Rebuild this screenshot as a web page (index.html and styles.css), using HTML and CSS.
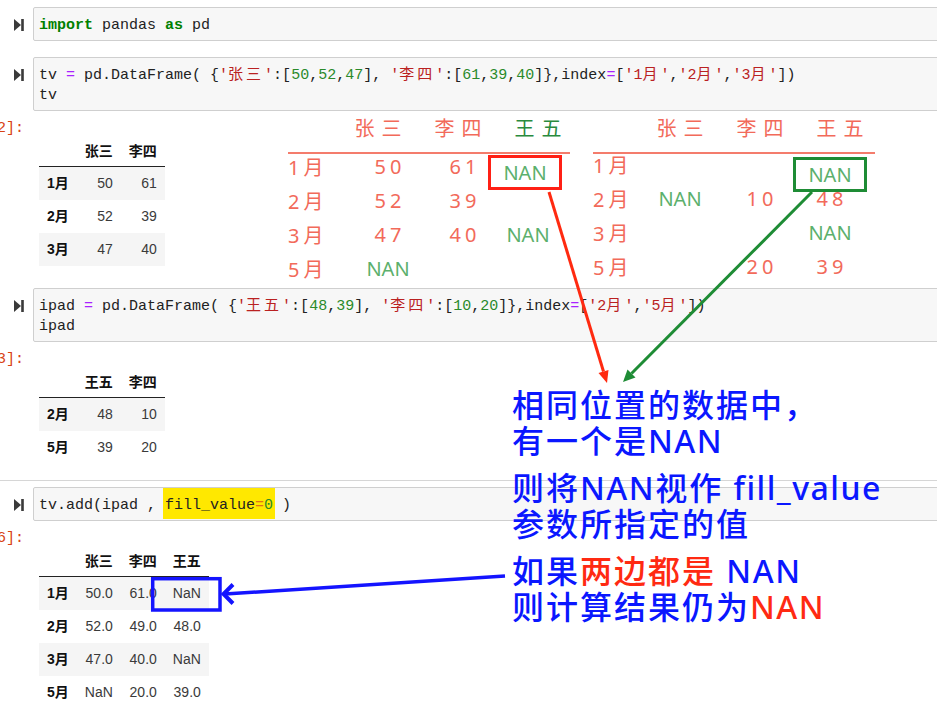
FILE: index.html
```html
<!DOCTYPE html>
<html lang="zh">
<head>
<meta charset="utf-8">
<title>pandas add fill_value</title>
<link rel="stylesheet" href="styles.css">
</head>
<body>
<div class="page">
  <div class="nb">
    <div class="cell first">
      <div class="prompt"><svg class="run" width="10" height="12" viewBox="0 0 10 12"><path d="M0 0L7 6L0 12Z"/><rect x="7.2" y="0" width="2.6" height="12"/></svg></div>
      <div class="input"><pre><span class="kw">import</span> pandas <span class="kw">as</span> pd</pre></div>
    </div>

    <div class="cell">
      <div class="prompt"><svg class="run" width="10" height="12" viewBox="0 0 10 12"><path d="M0 0L7 6L0 12Z"/><rect x="7.2" y="0" width="2.6" height="12"/></svg></div>
      <div class="input"><pre>tv <span class="op">=</span> pd.DataFrame( {<span class="st">'<span class="cn">张三</span>'</span>:[<span class="nu">50</span>,<span class="nu">52</span>,<span class="nu">47</span>], <span class="st">'<span class="cn">李四</span>'</span>:[<span class="nu">61</span>,<span class="nu">39</span>,<span class="nu">40</span>]},index<span class="op">=</span>[<span class="st">'1<span class="cn">月</span>'</span>,<span class="st">'2<span class="cn">月</span>'</span>,<span class="st">'3<span class="cn">月</span>'</span>])
tv</pre></div>
    </div>
    <div class="output">
      <div class="oprompt"><span>Out[2]:</span></div>
      <table class="df">
        <thead><tr><th></th><th>张三</th><th>李四</th></tr></thead>
        <tbody>
          <tr><th>1月</th><td>50</td><td>61</td></tr>
          <tr><th>2月</th><td>52</td><td>39</td></tr>
          <tr><th>3月</th><td>47</td><td>40</td></tr>
        </tbody>
      </table>
    </div>

    <div class="cell gap">
      <div class="prompt"><svg class="run" width="10" height="12" viewBox="0 0 10 12"><path d="M0 0L7 6L0 12Z"/><rect x="7.2" y="0" width="2.6" height="12"/></svg></div>
      <div class="input"><pre>ipad <span class="op">=</span> pd.DataFrame( {<span class="st">'<span class="cn">王五</span>'</span>:[<span class="nu">48</span>,<span class="nu">39</span>], <span class="st">'<span class="cn">李四</span>'</span>:[<span class="nu">10</span>,<span class="nu">20</span>]},index<span class="op">=</span>[<span class="st">'2<span class="cn">月</span>'</span>,<span class="st">'5<span class="cn">月</span>'</span>])
ipad</pre></div>
    </div>
    <div class="output">
      <div class="oprompt"><span>Out[3]:</span></div>
      <table class="df">
        <thead><tr><th></th><th>王五</th><th>李四</th></tr></thead>
        <tbody>
          <tr><th>2月</th><td>48</td><td>10</td></tr>
          <tr><th>5月</th><td>39</td><td>20</td></tr>
        </tbody>
      </table>
    </div>

    <div class="cell sep">
      <div class="prompt"><svg class="run" width="10" height="12" viewBox="0 0 10 12"><path d="M0 0L7 6L0 12Z"/><rect x="7.2" y="0" width="2.6" height="12"/></svg></div>
      <div class="input"><pre>tv.add(ipad , <span class="hl">fill_value<span class="op2">=</span><span class="nu">0</span></span> )</pre></div>
    </div>
    <div class="output">
      <div class="oprompt"><span>Out[6]:</span></div>
      <table class="df">
        <thead><tr><th></th><th>张三</th><th>李四</th><th>王五</th></tr></thead>
        <tbody>
          <tr><th>1月</th><td>50.0</td><td>61.0</td><td>NaN</td></tr>
          <tr><th>2月</th><td>52.0</td><td>49.0</td><td>48.0</td></tr>
          <tr><th>3月</th><td>47.0</td><td>40.0</td><td>NaN</td></tr>
          <tr><th>5月</th><td>NaN</td><td>20.0</td><td>39.0</td></tr>
        </tbody>
      </table>
    </div>
  </div>

  <div class="ann ann1">
    <div class="ann-head h1"><span></span><span>张三</span><span>李四</span><span class="gdark">王五</span></div>
    <div class="ann-rule"></div>
    <div class="ann-body b1">
      <span class="lbl">1月</span><span class="num">50</span><span class="num">61</span><span class="box box-r nan">NAN</span>
      <span class="lbl">2月</span><span class="num">52</span><span class="num">39</span><span></span>
      <span class="lbl">3月</span><span class="num">47</span><span class="num">40</span><span class="nan">NAN</span>
      <span class="lbl">5月</span><span class="nan">NAN</span><span></span><span></span>
    </div>
  </div>

  <div class="ann ann2">
    <div class="ann-head h2"><span></span><span>张三</span><span>李四</span><span>王五</span></div>
    <div class="ann-rule"></div>
    <div class="ann-body b2">
      <span class="lbl">1月</span><span></span><span></span><span class="box box-g nan">NAN</span>
      <span class="lbl">2月</span><span class="nan">NAN</span><span class="num">10</span><span class="num">48</span>
      <span class="lbl">3月</span><span></span><span></span><span class="nan">NAN</span>
      <span class="lbl">5月</span><span></span><span class="num">20</span><span class="num">39</span>
    </div>
  </div>

  <svg class="arrows" width="937" height="715" viewBox="0 0 937 715">
    <line x1="549" y1="192" x2="603.5" y2="371.5" stroke="#ff2a10" stroke-width="3"/>
    <polygon points="607,383 608.5,370 598.5,373" fill="#ff2a10"/>
    <line x1="812" y1="192" x2="631.5" y2="373.5" stroke="#1e8c35" stroke-width="3"/>
    <polygon points="623,382 635.5,377.5 627.5,369.5" fill="#1e8c35"/>
    <rect x="152.7" y="578.7" width="67.3" height="31.3" fill="none" stroke="#1414ff" stroke-width="3.5"/>
    <line x1="505" y1="576" x2="225" y2="594" stroke="#1414ff" stroke-width="3.5"/>
    <polyline points="233,584.5 223.5,594 233,603.5" fill="none" stroke="#1414ff" stroke-width="4"/>
  </svg>

  <div class="note">
    <p>相同位置的数据中，<br>有一个是<span class="lat">NAN</span></p>
    <p>则将<span class="lat">NAN</span>视作 <span class="lat">fill_value</span><br>参数所指定的值</p>
    <p>如果<span class="red">两边都是</span> <span class="lat">NAN</span><br>则计算结果仍为<span class="lat red">NAN</span></p>
  </div>
</div>
</body>
</html>
```

FILE: styles.css
```css
html, body {
  margin: 0;
  padding: 0;
  background: #fff;
}

.page {
  position: relative;
  width: 937px;
  height: 715px;
  overflow: hidden;
}

.nb {
  width: 990px;
}

/* ---------- code cells ---------- */
.cell {
  display: flex;
  align-items: flex-start;
  margin-top: 16px;
}
.cell.first { margin-top: 7px; }
.cell.gap { margin-top: 22px; }
.cell.sep {
  margin-top: 16px;
  border-top: 1px solid #d6d6d6;
  padding-top: 6px;
}

.prompt {
  width: 33px;
  flex: none;
  box-sizing: border-box;
  padding: 12px 0 0 14px;
}
.run { display: block; fill: #3a3a3a; }

.input {
  flex: 1;
  background: #f7f7f7;
  border: 1px solid #cfcfcf;
  border-radius: 2px;
  padding: 8px 6px 4px 5px;
}
.input pre {
  margin: 0;
  font-family: "Liberation Mono", "Noto Sans CJK SC", monospace;
  font-size: 15px;
  line-height: 20px;
  color: #222;
  white-space: pre;
}
.kw { color: #008000; font-weight: bold; }
.op { color: #aa22ff; }
.op2 { color: #e0701a; }
.st { color: #ba2121; }
.nu { color: #2a8a2a; }
.cn { letter-spacing: 3px; }
.hl {
  background: #ffe800;
  padding: 9px 2px 5px;
  margin: 0 -2px;
}

/* ---------- output ---------- */
.output {
  display: flex;
  align-items: flex-start;
  margin-top: 6px;
}
.oprompt {
  width: 24px;
  flex: none;
  display: flex;
  justify-content: flex-end;
  overflow: hidden;
  padding-top: 2px;
  font-family: "Liberation Mono", monospace;
  font-size: 15px;
  line-height: 20px;
  color: #d84315;
  white-space: nowrap;
}
.oprompt span { flex: none; }

.df {
  border-collapse: collapse;
  border-spacing: 0;
  margin: 16px 0 0 15px;
  font-family: "Liberation Sans", "Noto Sans CJK SC", sans-serif;
  font-size: 14px;
  color: #3a3a3a;
}
.df th, .df td {
  padding: 8px;
  line-height: 17px;
  text-align: right;
  white-space: nowrap;
  vertical-align: middle;
}
.df th { font-weight: bold; color: #111; }
.df thead th {
  border-bottom: 1px solid #222;
  padding: 10px 8px 6px;
}
.df tbody tr:nth-child(odd) { background: #f5f5f5; }

/* ---------- hand-drawn annotation tables ---------- */
.ann {
  position: absolute;
  top: 112px;
  font-family: "Noto Sans", "Noto Sans CJK SC", sans-serif;
  font-size: 20px;
  color: #f26a5a;
}
.ann1 { left: 288px; }
.ann2 { left: 593px; }

.ann-head {
  display: grid;
  height: 30px;
  align-items: center;
}
.h1 { grid-template-columns: 50px 80px 80px 80px; }
.h2 { grid-template-columns: 47px 80px 80px 80px; }
.ann-head span {
  text-align: center;
  letter-spacing: 7px;
  padding-left: 7px;
}
.gdark { color: #2a8a3e; }

.ann-rule {
  width: 282px;
  height: 2px;
  margin-top: 10px;
  background: #f47c6c;
}

.ann-body {
  display: grid;
  grid-auto-rows: 34px;
  align-items: center;
}
.b1 { grid-template-columns: 60px 80px 70px 60px; margin-top: -5px; }
.b2 { grid-template-columns: 47px 80px 80px 60px; margin-top: -7px; }
.ann-body span { text-align: center; }
.ann-body .lbl { text-align: left; letter-spacing: 4px; }
.ann-body .num { letter-spacing: 4px; padding-left: 4px; }
.nan { color: #5cb06c; }

.ann-body .box {
  align-self: start;
  justify-self: start;
  box-sizing: border-box;
  width: 74px;
  height: 35px;
  border: 3px solid;
  display: flex;
  align-items: center;
  justify-content: center;
}
.ann-body .box-r { border-color: #ff2015; margin: 6px 0 0 -10px; }
.ann-body .box-g { border-color: #1e8c35; margin: 10px 0 0 -7px; }

/* ---------- arrows ---------- */
.arrows {
  position: absolute;
  left: 0;
  top: 0;
  pointer-events: none;
}

/* ---------- blue note ---------- */
.note {
  position: absolute;
  left: 512px;
  top: 387px;
  display: flex;
  flex-direction: column;
  gap: 11px;
  font-family: "Noto Sans", "Noto Sans CJK SC", sans-serif;
  font-size: 32px;
  font-weight: 500;
  line-height: 36px;
  letter-spacing: 2px;
  color: #0a17ff;
  white-space: nowrap;
}
.note p { margin: 0; }
.note .lat { letter-spacing: 1.5px; }
.note .red { color: #ff2a12; }
```
